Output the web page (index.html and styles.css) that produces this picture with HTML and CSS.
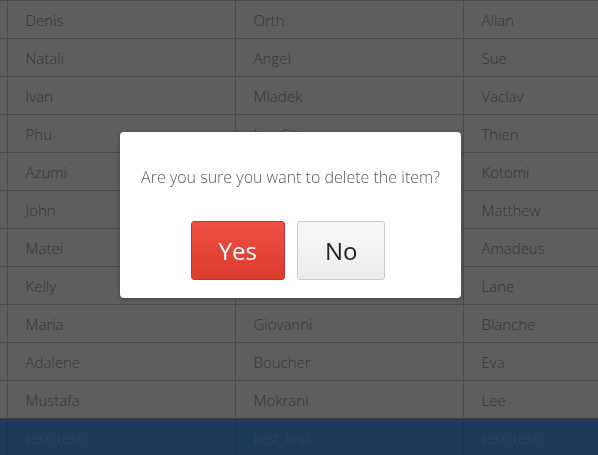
FILE: index.html
```html
<!DOCTYPE html>
<html lang="en">
<head>
<meta charset="utf-8">
<title>Delete confirmation</title>
<link rel="stylesheet" href="styles.css">
</head>
<body>
<table class="grid">
  <colgroup>
    <col class="c-sel"><col class="c-name"><col class="c-name"><col>
  </colgroup>
  <tbody>
    <tr><td></td><td>Denis</td><td>Orth</td><td>Allan</td></tr>
    <tr><td></td><td>Natali</td><td>Angel</td><td>Sue</td></tr>
    <tr><td></td><td>Ivan</td><td>Mladek</td><td>Vaclav</td></tr>
    <tr><td></td><td>Phu</td><td>Lee Sitova</td><td>Thien</td></tr>
    <tr><td></td><td>Azumi</td><td>Tanaka</td><td>Kotomi</td></tr>
    <tr><td></td><td>John</td><td>Smith</td><td>Matthew</td></tr>
    <tr><td></td><td>Matei</td><td>Ionescu</td><td>Amadeus</td></tr>
    <tr><td></td><td>Kelly</td><td>Hoffman</td><td>Lane</td></tr>
    <tr><td></td><td>Maria</td><td>Giovanni</td><td>Blanche</td></tr>
    <tr><td></td><td>Adalene</td><td>Boucher</td><td>Eva</td></tr>
    <tr><td></td><td>Mustafa</td><td>Mokrani</td><td>Lee</td></tr>
    <tr class="selected"><td></td><td>test_test</td><td>test_test</td><td>test_test</td></tr>
  </tbody>
</table>

<div class="overlay">
  <div class="dialog">
    <p class="message">Are you sure you want to delete the item?</p>
    <div class="actions">
      <button class="btn btn-yes">Yes</button>
      <button class="btn btn-no">No</button>
    </div>
  </div>
</div>
</body>
</html>
```

FILE: styles.css
```css
html, body {
  margin: 0;
  padding: 0;
  background: #bcbcbc;
  font-family: "Open Sans", "DejaVu Sans", sans-serif;
  overflow: hidden;
}

.grid {
  width: 620px;
  border-collapse: collapse;
  table-layout: fixed;
  background: #bcbcbc;
}

.c-sel { width: 7px; }
.c-name { width: 228px; }

.grid td {
  height: 37px;
  padding: 0 0 0 18px;
  border-top: 1px solid #949494;
  border-left: 1px solid #949494;
  font-size: 15px;
  font-weight: 300;
  color: #6e6e6e;
  white-space: nowrap;
  overflow: hidden;
}

.grid td:first-child {
  padding: 0;
  border-left: none;
}

.grid tr.selected td {
  background: #3876b8;
  color: #5a8fc8;
  border-top-color: #7a7a7a;
  border-left-color: #2f6aa8;
}

.overlay {
  position: fixed;
  inset: 0;
  background: rgba(0, 0, 0, 0.5);
  display: flex;
  align-items: flex-start;
  padding: 132px 0 0 120px;
}

.dialog {
  width: 341px;
  box-sizing: border-box;
  height: 166px;
  background: #ffffff;
  border-radius: 4px;
  box-shadow: 0 1px 4px rgba(0, 0, 0, 0.3);
  padding-top: 35px;
  text-align: center;
}

.message {
  margin: 0;
  font-size: 16px;
  line-height: 20px;
  font-weight: 300;
  color: #5a5a5a;
}

.actions {
  margin-top: 34px;
  display: flex;
  justify-content: center;
  gap: 12px;
  padding-right: 5px;
}

.btn {
  height: 59px;
  padding: 0 27px;
  border-radius: 3px;
  font-family: "Open Sans", "DejaVu Sans", sans-serif;
  font-size: 24px;
  font-weight: 400;
  cursor: pointer;
}

.btn-yes {
  background: linear-gradient(#ef4e42, #dc3c30);
  border: 1px solid #c8362b;
  color: #ffffff;
}

.btn-no {
  background: linear-gradient(#f8f8f8, #ececec);
  border: 1px solid #c9c9c9;
  color: #222222;
}
```
